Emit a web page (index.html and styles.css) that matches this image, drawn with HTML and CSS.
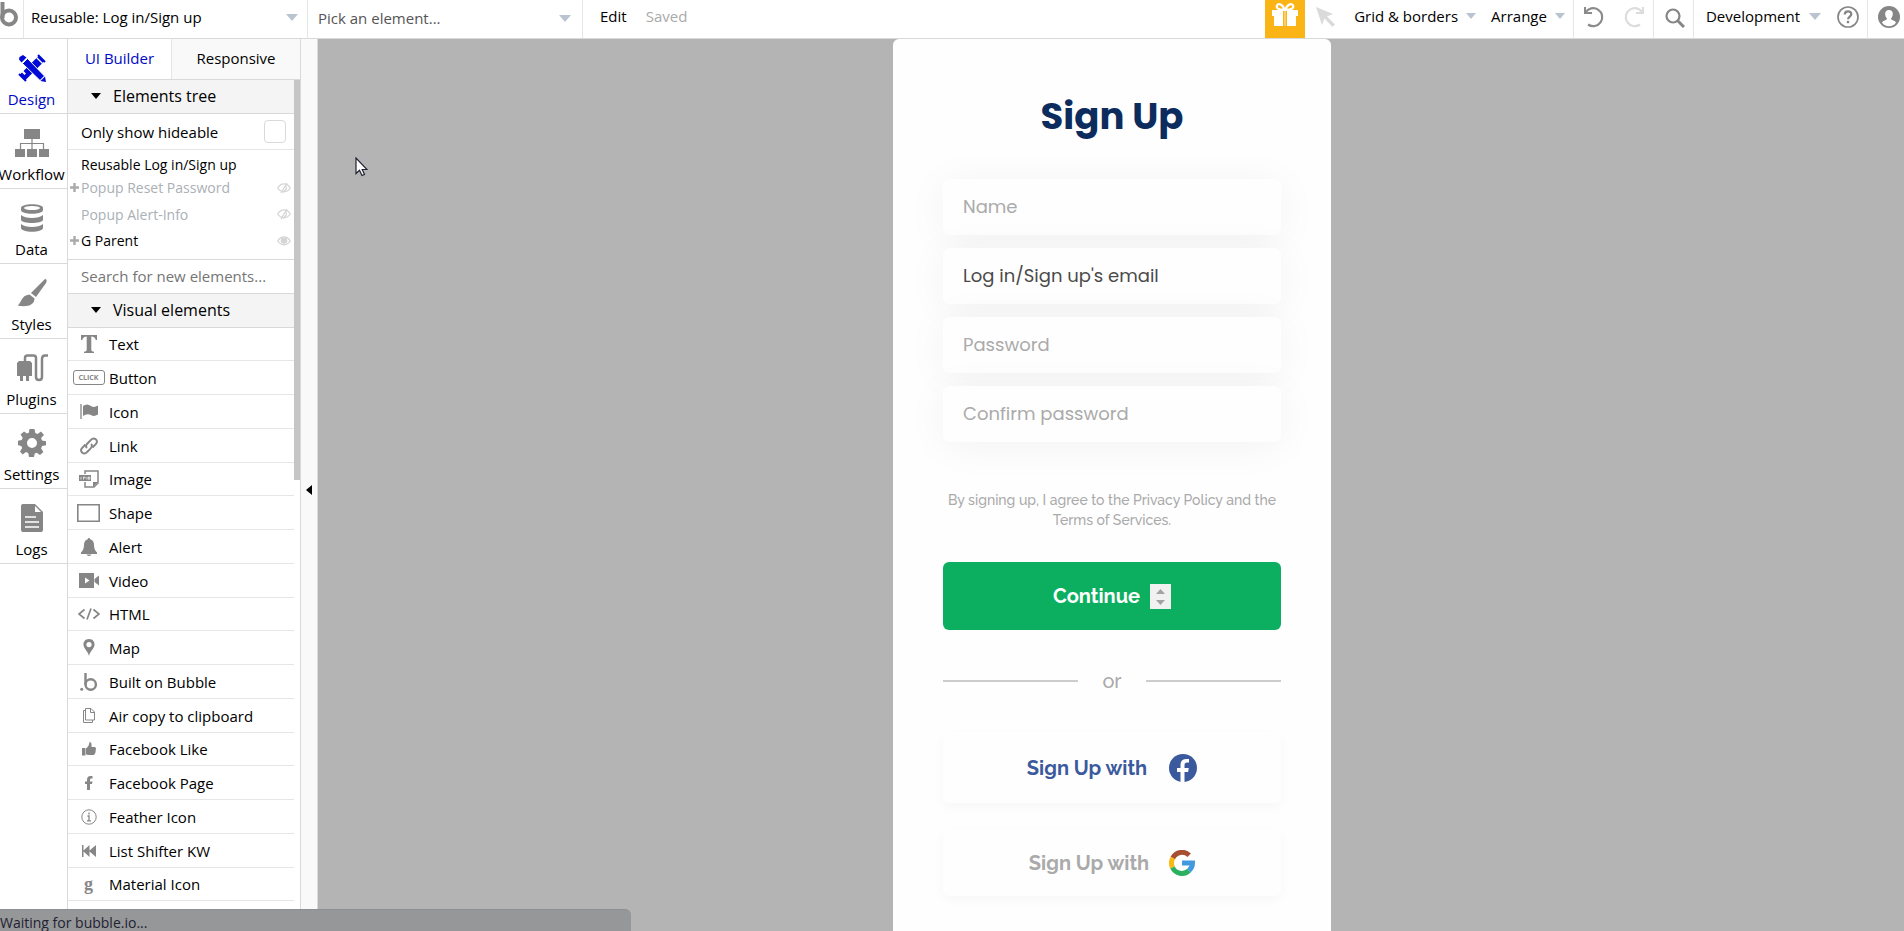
FILE: index.html
```
<!DOCTYPE html>
<html lang="en">
<head>
<meta charset="utf-8">
<title>Reusable: Log in/Sign up</title>
<link rel="stylesheet" href="styles.css">
</head>
<body>
<div class="app">
  <header class="topbar">
    <div class="logo"><svg width="20" height="28" viewBox="0 0 20 28"><path d="M2.500 1v16" stroke="#868686" stroke-width="4" fill="none"/><circle cx="9" cy="16.500" r="7" stroke="#868686" stroke-width="4" fill="none"/></svg></div>
    <div class="picker picker-page">
      <select aria-label="Page"><option>Reusable: Log in/Sign up</option></select>
      <svg class="caret" width="12" height="7" viewBox="0 0 12 7"><path d="M0 0h12L6 7z"/></svg>
    </div>
    <div class="picker picker-element">
      <select aria-label="Element"><option>Pick an element...</option></select>
      <svg class="caret" width="12" height="7" viewBox="0 0 12 7"><path d="M0 0h12L6 7z"/></svg>
    </div>
    <button class="edit">Edit</button>
    <span class="saved">Saved</span>
    <div class="tools">
      <button class="gift" aria-label="Gift"><svg width="28" height="26" viewBox="0 0 28 26"><g fill="#fff"><path d="M1 8h11v6H1zM16 8h11v6H16zM3 14h9v10H3zM16 14h9v10h-9z"/><path d="M13 9h2v15h-2z" opacity=".35"/></g><g fill="none" stroke="#fff" stroke-width="2.200"><path d="M13.500 8C7 8 5 6 6 3.500S12 2 13.500 8zM14.500 8c6.500 0 8.500-2 7.500-4.500S16 2 14.500 8z"/></g></svg></button>
      <button class="pointer" aria-label="Pointer"><svg width="20" height="20" viewBox="0 0 20 20"><path d="M0 0l17 7-6 2.500 8 8-2.500 2.500-8-8.500L6 18z" fill="#dadada"/></svg></button>
      <button class="menu">Grid &amp; borders<svg class="caret" width="10" height="6" viewBox="0 0 12 7"><path d="M0 0h12L6 7z"/></svg></button>
      <button class="menu menu-arrange">Arrange<svg class="caret" width="10" height="6" viewBox="0 0 12 7"><path d="M0 0h12L6 7z"/></svg></button>
      <div class="history">
        <button aria-label="Undo"><svg width="22" height="22" viewBox="0 0 22 22"><path d="M2 1v6h7" fill="none" stroke="#8b8b8b" stroke-width="2"/><path d="M2.500 6.500A9 9 0 1 1 5 18.500" fill="none" stroke="#8b8b8b" stroke-width="2.200"/></svg></button>
        <button aria-label="Redo"><svg width="22" height="22" viewBox="0 0 22 22"><path d="M20 1v6h-7" fill="none" stroke="#dcdcdc" stroke-width="2"/><path d="M19.500 6.500A9 9 0 1 0 17 18.500" fill="none" stroke="#dcdcdc" stroke-width="2.200"/></svg></button>
      </div>
      <button class="find" aria-label="Search"><svg width="20" height="20" viewBox="0 0 20 20" fill="none" stroke="#868686"><circle cx="8" cy="8" r="6.500" stroke-width="2.200"/><path d="M12.500 12.500l6.500 6.500" stroke-width="3"/></svg></button>
      <button class="menu menu-dev">Development<svg class="caret" width="12" height="7" viewBox="0 0 12 7"><path d="M0 0h12L6 7z"/></svg></button>
      <button class="help" aria-label="Help"><svg width="22" height="22" viewBox="0 0 22 22" fill="none" stroke="#868686"><circle cx="11" cy="11" r="10" stroke-width="1.700"/><path d="M7.800 8.500c0-4.200 6.600-4 6.500-.2 0 2.200-3.200 2.400-3.200 5" stroke-width="2.300"/><path d="M11 14.800v2.400" stroke-width="2.400"/></svg></button>
      <button class="user" aria-label="Account"><svg width="22" height="22" viewBox="0 0 22 22"><circle cx="11" cy="11" r="11" fill="#868686"/><path d="M11 4c-5 0-4.500 6-2 8.500 0 2-3.500 1.500-5 4 3 5 11 5 14 0-1.500-2.500-5-2-5-4C15.500 10 16 4 11 4z" fill="#fff"/></svg></button>
    </div>
  </header>

  <div class="workspace">
    <nav class="rail">
      <a href="#" class="rail-item active"><span class="rail-icon"><svg width="28" height="28" viewBox="0 0 28 28"><path d="M21 1.500l5.500 5.500L7 26.500 1.500 21l2.500-2.500 2.500 2.500 1.500-1.500L5.500 17l3-3z" fill="#0009d6"/><path d="M20 1l7 7M1 20l7 7" stroke="#0009d6" stroke-width="2"/><path d="M18.500 3.500l6 6" stroke="#fff" stroke-width="1.300"/><path d="M9.500 4.500l17 17.500-4.500 4.500L4.500 9.500z" fill="#0009d6" stroke="#fff"/><path d="M5 1l3.500 2.500-5 5L1 5.500 1.500 3zM27 22.500l1 5.500-5.500-1z" fill="#0009d6"/></svg></span>Design</a>
      <a href="#" class="rail-item"><span class="rail-icon"><svg width="34" height="28" viewBox="0 0 34 28"><path d="M9 0h16v10H9zM0 20h10v8H0zM12 20h10v8H12zM24 20h10v8H24z" fill="#868686"/><path d="M17 10v10M5.500 20v-5.500h23V20" stroke="#868686" fill="none" stroke-width="1.200"/></svg></span>Workflow</a>
      <a href="#" class="rail-item"><span class="rail-icon"><svg width="22" height="28" viewBox="0 0 22 28"><g fill="#868686"><path d="M0 4c0-5 22-5 22 0v2c0 5-22 5-22 0z"/><path d="M0 11c4 4 18 4 22 0v5c-1 4-21 4-22 0z"/><path d="M0 20c4 4 18 4 22 0v4c-1 5-21 5-22 0z"/></g><ellipse cx="11" cy="4" rx="8" ry="2" fill="#fff"/></svg></span>Data</a>
      <a href="#" class="rail-item"><span class="rail-icon"><svg width="30" height="30" viewBox="0 0 30 30"><g fill="#868686"><path d="M28 1c2 0 2 2 1 4L19 19l-5-4z"/><path d="M12.500 16.500l5 4c0 7-8 9-17 7 4-2 3-10 12-11z"/></g></svg></span>Styles</a>
      <a href="#" class="rail-item"><span class="rail-icon"><svg width="32" height="28" viewBox="0 0 32 28"><path d="M1 9l2-2h11l2 2v13h-3v5h-3v-5H7v5H4v-5H1z" fill="#868686"/><path d="M9 8V4q0-2.500 2.500-2.500h6Q20 1.500 20 4v19q0 3 3 3t3-3V5q0-3.500 3-3.500h3" fill="none" stroke="#868686" stroke-width="2.500"/></svg></span>Plugins</a>
      <a href="#" class="rail-item"><span class="rail-icon"><svg width="28" height="28" viewBox="0 0 28 28"><path fill="#868686" fill-rule="evenodd" d="M11.500 0h5l.8 4 2.200.9L23 2.600 26 6l-2.900 3 .9 2.500 4 .8v4l-4 .8-.9 2.400L25.400 23 22 26l-3.300-2.300-2 .8-.7 3.500h-5l-.8-4-2.300-.9L4.700 25.500 2 22.500l2.200-3.400-.9-2.200-3.300-.6v-4.600l3.700-.7 1-2.200L2.500 5.500 6 2.500l3 2 1.800-.7zM14 9a5 5 0 1 0 0 10 5 5 0 0 0 0-10z"/></svg></span>Settings</a>
      <a href="#" class="rail-item"><span class="rail-icon"><svg width="22" height="28" viewBox="0 0 22 28"><path d="M2 0h12l8 8v18q0 2-2 2H2q-2 0-2-2V2q0-2 2-2z" fill="#868686"/><path d="M14 2v6h6z" fill="#fff"/><path d="M4 13h11M4 18h14M4 23h14" stroke="#fff" stroke-width="1.600"/></svg></span>Logs</a>
    </nav>

    <aside class="panel">
      <div class="tabs">
        <button class="tab tab-on">UI Builder</button>
        <button class="tab">Responsive</button>
      </div>
      <div class="panel-body">
        <div class="sections">
          <button class="section-head"><svg width="10" height="6" viewBox="0 0 10 6"><path d="M0 0h10L5 6z"/></svg>Elements tree</button>
          <label class="hideable">Only show hideable<input type="checkbox"></label>
          <ul class="tree">
            <li class="tree-row"><span class="plus"></span><span class="node">Reusable Log in/Sign up</span></li>
            <li class="tree-row dim"><span class="plus"><svg width="9" height="9" viewBox="0 0 9 9"><path d="M4.500 0v9M0 4.500h9" stroke="#aaa" stroke-width="2.400"/></svg></span><span class="node">Popup Reset Password</span><svg width="14" height="12" viewBox="0 0 14 12"><path d="M.7 6C4 .5 10 .5 13.300 6 10 11 4 11 .7 6zM4 11L10 1M7 8.500c2 0 3-2 2-4" fill="none" stroke="#d5d5d5" stroke-width="1.300"/></svg></li>
            <li class="tree-row dim tall"><span class="plus"></span><span class="node">Popup Alert-Info</span><svg width="14" height="12" viewBox="0 0 14 12"><path d="M.7 6C4 .5 10 .5 13.300 6 10 11 4 11 .7 6zM4 11L10 1M7 8.500c2 0 3-2 2-4" fill="none" stroke="#d5d5d5" stroke-width="1.300"/></svg></li>
            <li class="tree-row"><span class="plus"><svg width="9" height="9" viewBox="0 0 9 9"><path d="M4.500 0v9M0 4.500h9" stroke="#aaa" stroke-width="2.400"/></svg></span><span class="node">G Parent</span><svg width="14" height="12" viewBox="0 0 14 12"><path d="M.7 6C4 .5 10 .5 13.300 6 10 11 4 11 .7 6z" fill="none" stroke="#d5d5d5" stroke-width="1.300"/><circle cx="7" cy="5.500" r="3.300" fill="#d5d5d5"/></svg></li>
          </ul>
          <input class="search" type="text" aria-label="Search for new elements" placeholder="Search for new elements...">
          <button class="section-head"><svg width="10" height="6" viewBox="0 0 10 6"><path d="M0 0h10L5 6z"/></svg>Visual elements</button>
          <ul class="elements">
            <li><span class="el-icon"><svg width="16" height="18" viewBox="0 0 16 18"><path d="M0 0h16v5h-1.200Q14 1.500 10.300 1.500V15q0 1.500 2.700 1.700V18H3v-1.300q2.700-.2 2.700-1.700V1.500Q2 1.500 1.200 5H0z" fill="#868686"/></svg></span><span class="el-name">Text</span></li>
            <li><span class="el-icon"><span class="click">CLICK</span></span><span class="el-name">Button</span></li>
            <li><span class="el-icon"><svg width="18" height="15" viewBox="0 0 18 15"><path d="M1 0v15" stroke="#868686" stroke-width="1.300"/><path d="M3 2q4-3 8 0 3 2 7-.5v9q-4 2.500-7 .5-4-2-8 1z" fill="#868686"/></svg></span><span class="el-name">Icon</span></li>
            <li><span class="el-icon"><svg width="18" height="18" viewBox="0 0 18 18" fill="none" stroke="#868686" stroke-width="2"><path d="M7 11C4 8.500 9 5 11 2.800c3-3.300 8 .7 5 4L12.500 10.500"/><path d="M11 7c3 2.500-2 6-4 8.200-3 3.300-8-.7-5-4L5.500 7.500"/></svg></span><span class="el-name">Link</span></li>
            <li><span class="el-icon"><svg width="20" height="18" viewBox="0 0 20 18"><path d="M6 4V1h13v12l-4 4H6v-5" fill="none" stroke="#868686" stroke-width="1.500"/><path d="M14 17v-5h5z" fill="#868686"/><path d="M0 5h12v6H0z" fill="#868686"/><path d="M2 7v2.500M4.500 9.500V7H6v1.500M8 9.500V7M9.500 7h1.300v2.300H9.500z" stroke="#fff" stroke-width=".7" fill="none"/></svg></span><span class="el-name">Image</span></li>
            <li><span class="el-icon"><svg width="23" height="18" viewBox="0 0 23 18"><path d="M.8.800h21.400v16.400H.8z" fill="none" stroke="#868686" stroke-width="1.600"/></svg></span><span class="el-name">Shape</span></li>
            <li><span class="el-icon"><svg width="16" height="18" viewBox="0 0 16 18"><path d="M8 0q1 0 1.300 1.300Q13 2.500 13 7q0 5 3 7.500V16H0v-1.500Q3 12 3 7q0-4.500 3.700-5.700Q7 0 8 0zM5.500 16.500h5Q9.500 18 8 18t-2.500-1.500z" fill="#868686"/></svg></span><span class="el-name">Alert</span></li>
            <li><span class="el-icon"><svg width="20" height="15" viewBox="0 0 20 15"><path d="M0 0h15v15H0zM15.500 6L20 2.500v10L15.500 9z" fill="#868686"/><path d="M6 4.500l4.500 3L6 10.500z" fill="#fff"/></svg></span><span class="el-name">Video</span></li>
            <li><span class="el-icon"><svg width="22" height="12" viewBox="0 0 22 12" fill="none" stroke="#868686" stroke-width="1.700"><path d="M6.500 1.500L1 6l5.500 4.500M15.500 1.500L21 6l-5.500 4.500M13 .5L9 11.500"/></svg></span><span class="el-name">HTML</span></li>
            <li><span class="el-icon"><svg width="12" height="17" viewBox="0 0 12 17"><path fill-rule="evenodd" d="M6 0C2 0 .2 3 .5 6 1 10 5 12 6 17c1-5 5-7 5.500-11C11.800 3 10 0 6 0zm0 3a2.600 2.600 0 1 1 0 5.200A2.600 2.600 0 0 1 6 3z" fill="#868686"/></svg></span><span class="el-name">Map</span></li>
            <li><span class="el-icon"><svg width="18" height="18" viewBox="0 0 18 18"><circle cx="1.700" cy="16.300" r="1.500" fill="#868686"/><path d="M5.500 0v12" stroke="#868686" stroke-width="2.400"/><circle cx="10.700" cy="11.500" r="5.200" stroke="#868686" stroke-width="2.400" fill="none"/></svg></span><span class="el-name">Built on Bubble</span></li>
            <li><span class="el-icon"><svg width="12" height="15" viewBox="0 0 12 15" fill="none" stroke="#868686"><path d="M2.500.5H8l3.500 3.500v8h-9zM7.500.500V4.500h4M2.500 2.500h-2v12h9V12"/></svg></span><span class="el-name">Air copy to clipboard</span></li>
            <li><span class="el-icon"><svg width="14" height="14" viewBox="0 0 14 14"><path d="M0 6h3.500v7.500H0zM4 6.500q3-2 3.500-6.500Q10 0 9.500 5H13q1.500 1 .7 3 .3 3-1.700 5H6l-2-.8z" fill="#868686"/></svg></span><span class="el-name">Facebook Like</span></li>
            <li><span class="el-icon"><svg width="8" height="14" viewBox="0 0 8 14"><path d="M2 14V8H0V5.500h2V4q0-4 3.500-4H7.500v2.500H6Q5 2.500 5 4v1.500h2.500L7 8H5v6z" fill="#868686"/></svg></span><span class="el-name">Facebook Page</span></li>
            <li><span class="el-icon"><svg width="16" height="16" viewBox="0 0 16 16"><circle cx="8" cy="8" r="7.200" fill="none" stroke="#868686"/><path d="M8 3.500v2M6.500 7H8v4.500M6 11.800h4" stroke="#868686" stroke-width="1.300" fill="none"/></svg></span><span class="el-name">Feather Icon</span></li>
            <li><span class="el-icon"><svg width="14" height="12" viewBox="0 0 14 12"><path d="M0 0h1.500v5.500L7.500 0v5.500L14 0v12L7.500 6.500V12l-6-5.500V12H0z" fill="#868686"/></svg></span><span class="el-name">List Shifter KW</span></li>
            <li><span class="el-icon"><span class="g-mark">g</span></span><span class="el-name">Material Icon</span></li>
            <li></li>
          </ul>
        </div>
        <div class="scroll"><div class="thumb"></div></div>
      </div>
    </aside>

    <div class="gutter"><button aria-label="Collapse panel"><svg width="6" height="10" viewBox="0 0 6 10"><path d="M6 0v10L0 5z"/></svg></button></div>

    <main class="canvas">
      <form class="card">
        <h1>Sign Up</h1>
        <div class="fields">
          <input type="text" aria-label="Name" placeholder="Name">
          <input type="text" aria-label="Email" value="Log in/Sign up's email">
          <input type="password" aria-label="Password" placeholder="Password">
          <input type="password" aria-label="Confirm password" placeholder="Confirm password">
        </div>
        <p class="terms">By signing up, I agree to the Privacy Policy and the Terms of Services.</p>
        <button type="button" class="continue">Continue<svg width="21" height="25" viewBox="0 0 21 25"><path d="M0 0h21v25H0z" fill="#f1f1f1"/><path d="M6 10h9l-4.500-5zM6 16h9l-4.500 5z" fill="#a3a3a3"/></svg></button>
        <div class="divider"><span>or</span></div>
        <button type="button" class="social facebook">Sign Up with<svg width="28" height="28" viewBox="0 0 28 28"><circle cx="14" cy="14" r="14" fill="#3b5a9d"/><path d="M11.500 28V18H8v-4h3.500v-3q0-6 6-6H20v3.500h-2q-2.500 0-2.500 2.500v3h4.300l-.7 4h-3.600v10z" fill="#fff"/></svg></button>
        <button type="button" class="social google">Sign Up with<svg width="26" height="26" viewBox="0 0 26 26" fill="none" stroke-width="5"><path d="M3.800 8A10.400 10.400 0 0 1 20.200 5.200" stroke="#a94f31"/><path d="M3.500 17.500A10.400 10.400 0 0 1 3.800 8" stroke="#fbb914"/><path d="M20 20.600A10.400 10.400 0 0 1 3.500 17.500" stroke="#2bb05f"/><path d="M13 13h10.500q0 4.500-3.500 7.600" stroke="#4299e0"/></svg></button>
      </form>
    </main>
  </div>
  <svg class="cursor" width="13" height="20" viewBox="0 0 13 20"><path d="M1 1v15.500l3.500-3.300L7 18.500l2.500-1L7.200 12.500H12z" fill="#fff" stroke="#223" stroke-width="1.200"/></svg>
  <div class="status">Waiting for bubble.io...</div>
</div>
</body>
</html>
```
FILE: styles.css
```
* { box-sizing: border-box; }

body {
  margin: 0;
  font-family: "Open Sans", "Noto Sans", sans-serif;
  font-size: 15px;
  color: #000;
}

button, input, select {
  margin: 0;
  padding: 0;
  border: 0;
  background: none;
  font: inherit;
  color: inherit;
}

svg { display: block; flex: none; }
ul { list-style: none; margin: 0; padding: 0; }

.app {
  position: relative;
  display: flex;
  flex-direction: column;
  height: 100vh;
  overflow: hidden;
}

/* Top bar */
.topbar {
  display: flex;
  align-items: stretch;
  flex: none;
  height: 39px;
  border-bottom: 1px solid #d9d9d9;
  background: #fff;
  line-height: 28px;
}
.logo { width: 24px; padding-top: 1px; border-right: 1px solid #e6e6e6; }
.caret { fill: #b9c4d0; }
.picker { display: grid; align-items: start; border-right: 1px solid #e6e6e6; }
.picker select {
  grid-area: 1 / 1;
  appearance: none;
  height: 33px;
  padding: 0 24px 0 7px;
}
.picker .caret {
  grid-area: 1 / 1;
  justify-self: end;
  margin: 14px 9px 0 0;
  pointer-events: none;
}
.picker-page { width: 284px; }
.picker-element { width: 275px; color: #555; }
.picker-element select { padding-left: 10px; height: 35px; }
.picker-element .caret { margin: 15px 11px 0 0; }
.edit { padding: 0 0 6px 17px; }
.saved { padding: 2px 0 0 19px; color: #aaa; }
.tools { display: flex; margin-left: auto; }
.tools button { display: flex; align-items: center; }
.tools .gift { width: 40px; justify-content: center; background: #fbb416; padding-bottom: 8px; }
.tools .pointer { padding: 0 18px 5px 11px; }
.tools .menu { gap: 8px; padding-bottom: 6px; }
.tools .menu-arrange { padding: 0 8px 6px 15px; }
.history {
  display: flex;
  gap: 18px;
  padding: 0 8px 4px 9px;
  border-left: 1px solid #e6e6e6;
  border-right: 1px solid #e6e6e6;
}
.tools .find { padding: 0 8px 2px 11px; border-right: 1px solid #e6e6e6; }
.tools .menu-dev { gap: 9px; padding: 0 16px 6px 12px; }
.tools .help { padding: 0 8px 5px 0; }
.tools .user { width: 37px; padding: 0 0 5px 10px; border-left: 1px solid #e6e6e6; }

.workspace { display: flex; flex: 1; min-height: 0; }

/* Left rail */
.rail {
  flex: none;
  width: 68px;
  border-right: 1px solid #d9d9d9;
}
.rail-item {
  display: flex;
  flex-direction: column;
  align-items: center;
  height: 75px;
  padding: 11px 4px 0 0;
  border-bottom: 1px solid #d9d9d9;
  color: #000;
  font-size: 15px;
  line-height: 26px;
  text-decoration: none;
}
.rail-icon { display: flex; align-items: center; height: 36px; }
.active { color: #0009c4; }

/* Element panel */
.panel {
  display: flex;
  flex-direction: column;
  flex: none;
  width: 233px;
  border-right: 1px solid #d9d9d9;
}
.tabs { display: flex; flex: none; height: 41px; border-bottom: 1px solid #d9d9d9; }
.tab { flex: 1; padding-bottom: 2px; background: #f9f9f9; }
.tab-on {
  flex: none;
  width: 104px;
  border-right: 1px solid #e6e6e6;
  background: #fff;
  color: #0009c4;
}
.panel-body { display: flex; flex: 1; min-height: 0; }
.sections { flex: 1; overflow: hidden; }
.section-head {
  display: flex;
  align-items: center;
  gap: 12px;
  width: 100%;
  height: 34px;
  padding: 0 0 2px 23px;
  border-bottom: 1px solid #d9d9d9;
  background: #f4f4f4;
  font-size: 16px;
}
.hideable {
  display: flex;
  align-items: center;
  justify-content: space-between;
  height: 36px;
  padding: 0 8px 0 13px;
  border-bottom: 1px solid #e6e6e6;
}
.hideable input {
  appearance: none;
  width: 22px;
  height: 23px;
  border: 1px solid #d9d9d9;
  border-radius: 4px;
}
.tree {
  height: 110px;
  padding-top: 3px;
  border-bottom: 1px solid #d9d9d9;
  font-size: 14px;
}
.tree-row { display: flex; align-items: center; height: 23px; padding-right: 3px; }
.tree-row.tall { height: 30px; }
.dim { color: #aab0b6; }
.plus { width: 13px; padding-left: 2px; }
.node { flex: 1; }
.search {
  display: block;
  width: 100%;
  height: 34px;
  padding: 0 0 2px 13px;
  border-bottom: 1px solid #d9d9d9;
}
.search::placeholder { color: #757575; }
.elements li {
  display: flex;
  align-items: center;
  height: 34px;
  border-bottom: 1px solid #e6e6e6;
}
.elements li:nth-child(4n+1) { height: 33px; }
.el-icon { display: flex; justify-content: center; width: 41px; }
.el-name { line-height: 20px; }
.click {
  width: 32px;
  border: 1px solid #868686;
  border-radius: 3px;
  color: #868686;
  font-size: 7px;
  font-weight: 700;
  line-height: 13px;
  text-align: center;
}
.g-mark { color: #868686; font: 700 18px/20px "Liberation Serif", serif; }
.scroll { width: 6px; }
.thumb { height: 47%; background: #c5c5c5; }

.gutter {
  display: flex;
  align-items: center;
  flex: none;
  width: 17px;
  padding-top: 10px;
  border-right: 1px solid #d9d9d9;
  background: #f9f9f9;
}
.gutter button { padding-left: 5px; }

/* Canvas */
.canvas {
  display: flex;
  justify-content: center;
  flex: 1;
  padding-left: 2px;
  background: #b4b4b4;
}
.card {
  width: 438px;
  padding: 0 50px;
  border-radius: 6px 6px 0 0;
  background: #fefefe;
  font-family: Raleway, Lato, sans-serif;
  color: #aaa;
}
.card h1 {
  margin: 51px 0 37px;
  color: #0d2c5e;
  font: 700 37px/52px Poppins, Inter, sans-serif;
  text-align: center;
}
.fields { display: grid; gap: 13px; }
.fields input {
  width: 100%;
  height: 56px;
  padding: 0 20px 2px;
  border-radius: 6px;
  background: #fefefe;
  box-shadow: 0 4px 40px rgba(0, 0, 0, .05);
  color: #4a4a4a;
  font: 400 18px Poppins, Inter, sans-serif;
}
.fields input::placeholder { color: #aaa; }
.terms {
  margin: 48px 0 32px;
  font-size: 14px;
  font-weight: 500;
  line-height: 20px;
  text-align: center;
}
.continue {
  display: flex;
  align-items: center;
  justify-content: center;
  gap: 10px;
  width: 100%;
  height: 68px;
  border-radius: 6px;
  background: #0caf60;
  color: #fff;
  font-size: 20px;
  font-weight: 700;
}
.divider {
  display: flex;
  align-items: center;
  margin: 36px 0;
  font-size: 20px;
  font-weight: 500;
  line-height: 30px;
}
.divider span { width: 68px; text-align: center; }
.divider::before, .divider::after { content: ""; flex: 1; height: 2px; background: #ccc; }
.social {
  display: flex;
  align-items: center;
  justify-content: center;
  gap: 22px;
  width: 100%;
  height: 71px;
  border-radius: 6px;
  background: #fefefe;
  box-shadow: 0 4px 12px rgba(0, 0, 0, .03);
  font-size: 20px;
  font-weight: 700;
}
.facebook { color: #3b5a9d; }
.google { gap: 20px; height: 67px; margin-top: 26px; }

.cursor { position: absolute; left: 355px; top: 157px; }
.status {
  position: absolute;
  left: 0;
  bottom: 0;
  width: 631px;
  height: 22px;
  border-top: 1px solid #8e8f90;
  border-radius: 0 6px 0 0;
  background: #969798;
  color: #223;
  font-size: 14px;
  line-height: 26px;
}
```
